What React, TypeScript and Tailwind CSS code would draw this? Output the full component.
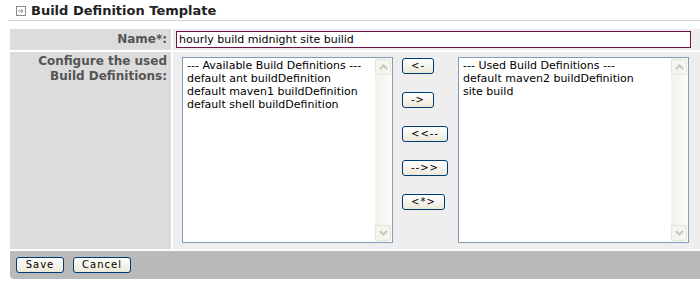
import React from 'react';

const font = { fontFamily: '"DejaVu Sans", Verdana, sans-serif' };

const ScrollBtn = ({ down }: { down?: boolean }) => (
  <div className="w-[16px] h-[16px] rounded-[2px] border border-[#e6e4dc] bg-[#f5f4ef] flex items-center justify-center">
    <svg width="9" height="6" viewBox="0 0 9 6">
      <path d={down ? 'M1 1 L4.5 4.5 L8 1' : 'M1 5 L4.5 1.5 L8 5'} stroke="#c9c7bd" strokeWidth="2" fill="none" />
    </svg>
  </div>
);

const ListBox = ({ items, width }: { items: string[]; width: string }) => (
  <div className={`${width} h-[186px] border border-[#7f9db9] bg-white flex`}>
    <div className="flex-1 pl-[4px] pt-[1px] text-[11px] leading-[13px] text-black whitespace-nowrap overflow-hidden">
      {items.map((it) => (
        <div key={it}>{it}</div>
      ))}
    </div>
    <div className="w-[17px] flex flex-col justify-between bg-gradient-to-r from-[#f4f3ee] to-[#fbfbf8] py-[1px] pr-[1px]">
      <ScrollBtn />
      <ScrollBtn down />
    </div>
  </div>
);

const XpButton = ({ label, w }: { label: string; w: string }) => (
  <button
    className={`${w} h-[16px] rounded-[3px] border border-[#003c74] bg-gradient-to-b from-white to-[#ece9d8] text-[10px] leading-[12px] text-black flex items-center justify-center tracking-[1px]`}
    style={font}
  >
    {label}
  </button>
);

export default function App() {
  return (
    <div className="w-[700px] h-[290px] bg-white overflow-hidden" style={font}>
      <div className="flex items-center gap-[5px] pl-[16px] pt-[3px] h-[19px]">
        <svg width="10" height="10" viewBox="0 0 10 10">
          <rect x="0.5" y="0.5" width="9" height="9" fill="white" stroke="#8a8a8a" />
          <path d="M2 5 H7 M5 3 L7 5 L5 7" stroke="#8a8a8a" fill="none" />
        </svg>
        <span className="text-[13px] font-bold text-[#222] leading-[16px]">Build Definition Template</span>
      </div>
      <div className="ml-[8px] h-[1px] bg-[#d4d4d4] mt-[1px]" />

      <div className="ml-[10px] mt-[8px] flex flex-col gap-[2px]">
        <div className="flex gap-[2px] h-[21px]">
          <div className="w-[161px] bg-[#dcdcdc] text-right pr-[4px] text-[12px] font-bold text-[#555] leading-[21px]">Name*:</div>
          <div className="flex-1 bg-[#eeeeee] flex items-center pl-[3px] pr-[9px]">
            <div className="w-full h-[17px] border border-[#6e1346] bg-white text-[11px] leading-[15px] pl-[2px] text-black">
              hourly build midnight site builid
            </div>
          </div>
        </div>

        <div className="flex gap-[2px] h-[197px]">
          <div className="w-[161px] bg-[#dcdcdc] text-right pr-[4px] pt-[2px] text-[12px] font-bold text-[#555] leading-[15px]">
            Configure the used
            <br />
            Build Definitions:
          </div>
          <div className="flex-1 bg-[#eeeeee] flex items-start pt-[5px] pl-[9px]">
            <ListBox
              width="w-[211px]"
              items={[
                '--- Available Build Definitions ---',
                'default ant buildDefinition',
                'default maven1 buildDefinition',
                'default shell buildDefinition',
              ]}
            />
            <div className="flex flex-col gap-[18px] ml-[9px] mr-[11px] w-[45px] pt-[1px]">
              <XpButton label="<-" w="w-[32px]" />
              <XpButton label="->" w="w-[32px]" />
              <XpButton label="<<--" w="w-[46px]" />
              <XpButton label="-->>" w="w-[46px]" />
              <XpButton label="<*>" w="w-[43px]" />
            </div>
            <ListBox
              width="w-[231px]"
              items={['--- Used Build Definitions ---', 'default maven2 buildDefinition', 'site build']}
            />
          </div>
        </div>

        <div className="h-[28px] bg-[#bababa] rounded-bl-[4px] flex items-center gap-[9px] pl-[6px]">
          <XpButton label="Save" w="w-[48px]" />
          <XpButton label="Cancel" w="w-[58px]" />
        </div>
      </div>
    </div>
  );
}
